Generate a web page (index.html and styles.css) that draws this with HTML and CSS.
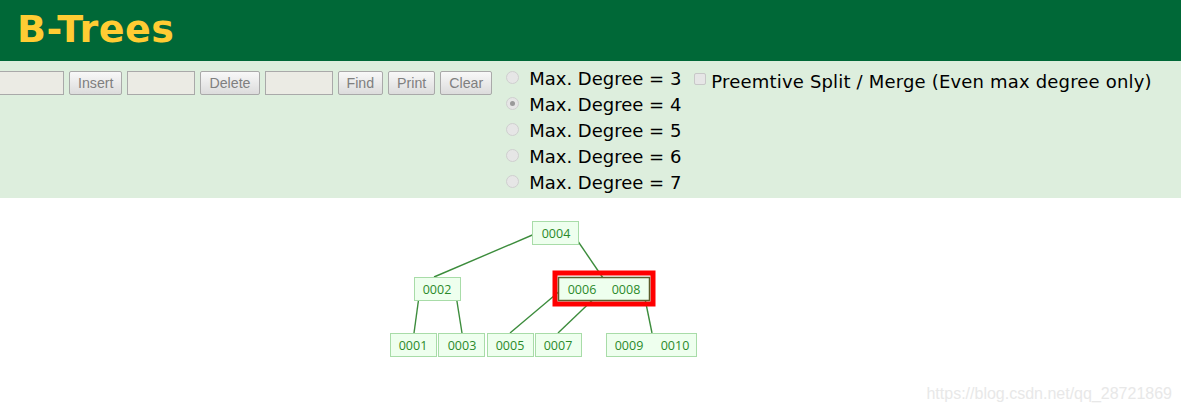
FILE: index.html
```html
<!DOCTYPE html>
<html>
<head>
<meta charset="utf-8">
<link rel="stylesheet" href="styles.css">
</head>
<body>
<header class="header"><h1 class="title">B-Trees</h1></header>
<section class="controls">
  <div class="toolbar">
    <input class="field first" type="text">
    <button class="btn">Insert</button>
    <input class="field" type="text">
    <button class="btn">Delete</button>
    <input class="field" type="text">
    <button class="btn">Find</button>
    <button class="btn">Print</button>
    <button class="btn">Clear</button>
  </div>
  <div class="degrees">
    <label class="deg"><span class="radio"></span>Max. Degree = 3</label>
    <label class="deg"><span class="radio on"></span>Max. Degree = 4</label>
    <label class="deg"><span class="radio"></span>Max. Degree = 5</label>
    <label class="deg"><span class="radio"></span>Max. Degree = 6</label>
    <label class="deg"><span class="radio"></span>Max. Degree = 7</label>
  </div>
  <label class="preempt"><span class="check"></span>Preemtive Split / Merge (Even max degree only)</label>
</section>
<main class="canvas">
  <svg class="tree" width="1181" height="215" viewBox="0 198 1181 215">
    <g class="edges">
      <line x1="537" y1="233" x2="434" y2="277"/>
      <line x1="573" y1="234" x2="603" y2="278"/>
      <line x1="420" y1="289" x2="414" y2="333"/>
      <line x1="455" y1="289" x2="462" y2="333"/>
      <line x1="561" y1="290" x2="510" y2="333"/>
      <line x1="603" y1="290" x2="558" y2="333"/>
      <line x1="643" y1="289" x2="652" y2="333"/>
    </g>
    <rect class="hl" x="555" y="273" width="98" height="31"/>
    <g class="nodes">
      <rect x="532.5" y="221.5" width="46" height="23"/>
      <rect x="414.5" y="277.5" width="46" height="23"/>
      <rect class="dark" x="558.5" y="277.5" width="91" height="23"/>
      <rect x="390.5" y="333.5" width="46" height="23"/>
      <rect x="438.5" y="333.5" width="46" height="23"/>
      <rect x="487.5" y="333.5" width="46" height="23"/>
      <rect x="535.5" y="333.5" width="46" height="23"/>
      <rect x="606.5" y="333.5" width="90" height="23"/>
    </g>
    <g class="keys">
      <text x="556" y="237.5">0004</text>
      <text x="437" y="293.5">0002</text>
      <text x="582" y="293.5">0006</text>
      <text x="626" y="293.5">0008</text>
      <text x="413" y="349.5">0001</text>
      <text x="462" y="349.5">0003</text>
      <text x="510" y="349.5">0005</text>
      <text x="558" y="349.5">0007</text>
      <text x="629" y="349.5">0009</text>
      <text x="675" y="349.5">0010</text>
    </g>
  </svg>
  <div class="watermark">https://blog.csdn.net/qq_28721869</div>
</main>
</body>
</html>
```
FILE: styles.css
```css
html, body {
  margin: 0;
  padding: 0;
  background: #ffffff;
}
body {
  width: 1181px;
  height: 413px;
  overflow: hidden;
  position: relative;
  font-family: "DejaVu Sans", Verdana, sans-serif;
}
.header {
  height: 61px;
  background: #006837;
  padding-left: 17px;
  box-sizing: border-box;
}
.title {
  margin: 0;
  font-family: "DejaVu Sans", Verdana, sans-serif;
  font-weight: bold;
  font-size: 38px;
  line-height: 58px;
  color: #ffcc33;
  letter-spacing: 0.5px;
}
.controls {
  height: 137px;
  background: #ddeedd;
  display: flex;
  align-items: flex-start;
  box-sizing: border-box;
  padding-top: 4px;
}
.toolbar {
  display: flex;
  gap: 5px;
  margin-top: 6px;
  margin-left: -4px;
}
.field {
  width: 68px;
  height: 24px;
  box-sizing: border-box;
  border: 1px solid #a9a9a9;
  background: #ebebe4;
  margin: 0;
  padding: 0;
}
.btn {
  height: 24px;
  box-sizing: border-box;
  margin: 0;
  padding: 0 8px;
  border: 1px solid #a9a9a9;
  border-radius: 2px;
  background: linear-gradient(#f8f8f8, #dcdcdc);
  color: #7f7f7f;
  font-family: "Liberation Sans", Arial, sans-serif;
  font-size: 14.2px;
  line-height: 22px;
}
.degrees {
  display: flex;
  flex-direction: column;
  margin-left: 14px;
}
.deg {
  display: flex;
  align-items: center;
  height: 26px;
  font-size: 18px;
  color: #000000;
}
.radio {
  width: 13px;
  height: 13px;
  box-sizing: border-box;
  border-radius: 50%;
  border: 1px solid #cfcfcf;
  background: #e6e6e6;
  margin-right: 10px;
  margin-top: -1px;
  display: flex;
  align-items: center;
  justify-content: center;
}
.radio.on::after {
  content: "";
  width: 5px;
  height: 5px;
  border-radius: 50%;
  background: #9a9a9a;
}
.preempt {
  display: flex;
  align-items: center;
  height: 26px;
  margin-top: 3px;
  margin-left: 13px;
  font-size: 18px;
  letter-spacing: 0.18px;
  color: #000000;
}
.check {
  width: 12px;
  height: 12px;
  box-sizing: border-box;
  border: 1px solid #c8c8c8;
  border-radius: 2px;
  background: #e6e6e6;
  margin-right: 5px;
  margin-top: -4px;
}
.canvas {
  height: 215px;
}
.tree {
  display: block;
}
.edges line {
  stroke: #3c8c3c;
  stroke-width: 1.4;
}
.hl {
  fill: none;
  stroke: #ff0000;
  stroke-width: 5;
}
.nodes rect {
  fill: #eeffee;
  stroke: #a8dca8;
  stroke-width: 1;
}
.nodes rect.dark {
  stroke: #5c5c2a;
  stroke-width: 1.5;
}
.keys text {
  font-family: "Open Sans", "Noto Sans", sans-serif;
  font-size: 12.5px;
  fill: #2a8a2a;
  text-anchor: middle;
}
.watermark {
  position: absolute;
  right: 9px;
  bottom: 10px;
  font-family: "Liberation Sans", Arial, sans-serif;
  font-size: 16px;
  color: #e8e8e8;
}
```
